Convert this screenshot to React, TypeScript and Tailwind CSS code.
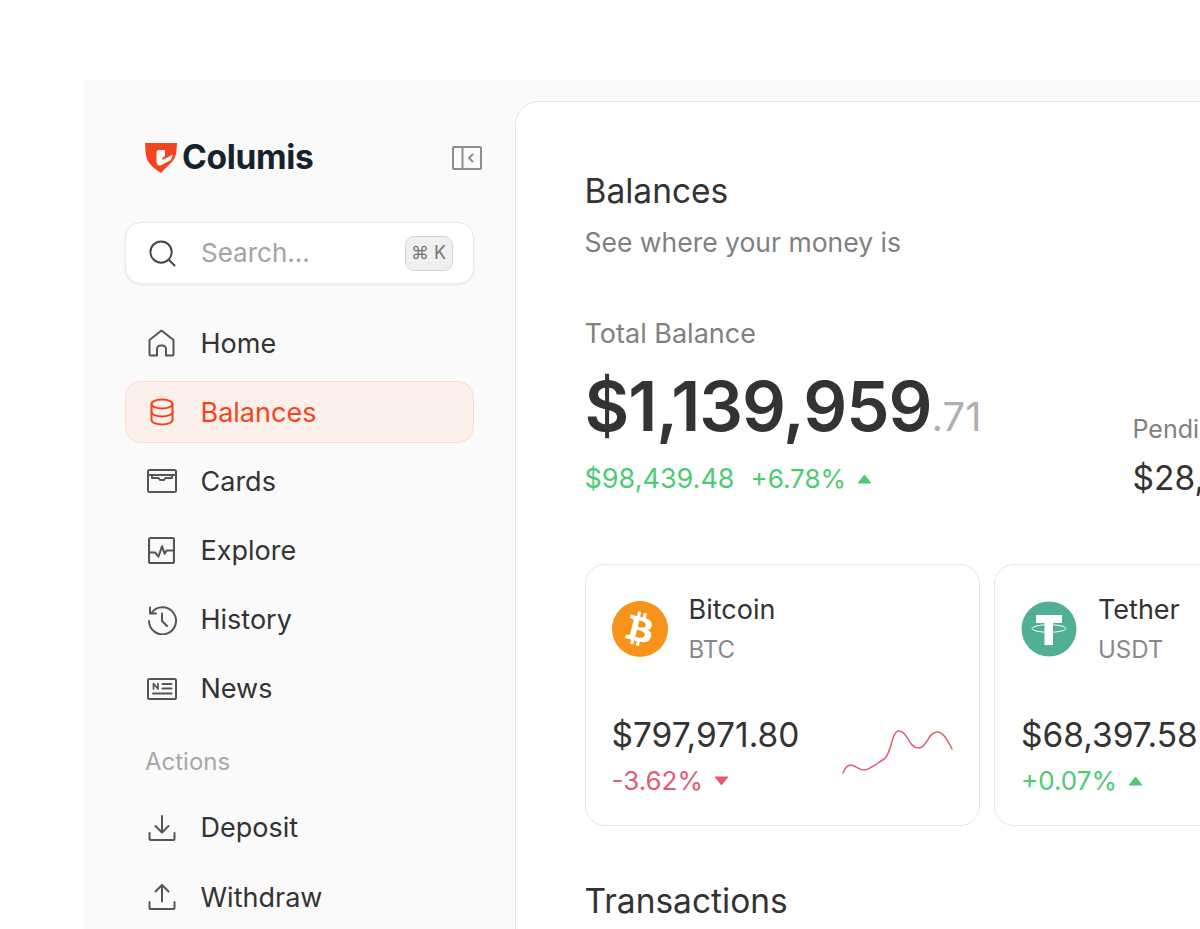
import React from 'react';
import { FaBtc } from 'react-icons/fa';

type IconProps = { className?: string };

const stroke = {
    fill: 'none',
    stroke: 'currentColor',
    strokeWidth: 2,
    strokeLinecap: 'round' as const,
    strokeLinejoin: 'round' as const,
};

function HomeIcon({ className }: IconProps) {
    return (
        <svg viewBox="0 0 27 28" className={className} {...stroke}>
            <path d="M1.500 11 13.500 1.500l12 9.500v14.500a1 1 0 0 1-1 1H18v-6.500a3.500 3.500 0 0 0-3.500-3.500h-2A3.500 3.500 0 0 0 9 20v6.500H2.500a1 1 0 0 1-1-1z" />
        </svg>
    );
}

function DatabaseIcon({ className }: IconProps) {
    return (
        <svg viewBox="0 0 24 28" className={className} {...stroke}>
            <ellipse cx="12" cy="6" rx="10.500" ry="4.500" />
            <path d="M1.500 6v16c0 2.500 4.700 4.500 10.500 4.500s10.500-2 10.500-4.500V6" />
            <path d="M1.500 14c0 2.500 4.700 4.500 10.500 4.500s10.500-2 10.500-4.500" />
        </svg>
    );
}

function CardsIcon({ className }: IconProps) {
    return (
        <svg viewBox="0 0 30 24" className={className} {...stroke}>
            <rect x="1" y="1" width="28" height="22" rx="1.500" />
            <path d="M1 6h28" />
            <path d="M5 6v3h6.500l1.500 2h4l1.500-2H25V6" />
        </svg>
    );
}

function ExploreIcon({ className }: IconProps) {
    return (
        <svg viewBox="0 0 26 26" className={className} {...stroke}>
            <rect x="1" y="1" width="24" height="24" rx="1.500" />
            <path d="M1 15h6l3 4 3.500-10 2.500 7 2-3h6.500" />
        </svg>
    );
}

function HistoryIcon({ className }: IconProps) {
    return (
        <svg viewBox="0 0 30 30" className={className} {...stroke}>
            <path d="M4.500 8A13.500 13.500 0 1 1 2 16" />
            <path d="M3 2.500V8.500h6" />
            <path d="M15 8.500v7.500l5 5" />
        </svg>
    );
}

function NewsIcon({ className }: IconProps) {
    return (
        <svg viewBox="0 0 30 22" className={className} {...stroke}>
            <rect x="1" y="1" width="28" height="20" rx="1.500" />
            <path d="M6.500 11V5.500l4.500 5.500V5.500" strokeWidth="1.700" />
            <path d="M15.500 6h9M15.500 10.500h9M6 15.500h18.500" />
        </svg>
    );
}

function DepositIcon({ className }: IconProps) {
    return (
        <svg viewBox="0 0 28 28" className={className} {...stroke}>
            <path d="M14 2v16M7.500 12l6.500 6.500 6.500-6.500" />
            <path d="M1.500 19v6a1 1 0 0 0 1 1h23a1 1 0 0 0 1-1v-6" />
        </svg>
    );
}

function WithdrawIcon({ className }: IconProps) {
    return (
        <svg viewBox="0 0 28 28" className={className} {...stroke}>
            <path d="M14 18.500V2M7.500 8.500 14 2l6.500 6.500" />
            <path d="M1.500 19v6a1 1 0 0 0 1 1h23a1 1 0 0 0 1-1v-6" />
        </svg>
    );
}

function Logo() {
    return (
        <svg viewBox="0 0 32 30" className="w-[32px] h-[30px]">
            <path fill="#f4441f" d="M0 0h32l-.6 8.500c-.5 5-2.500 8.500-5.500 11.500-3 3-6.500 6-9.900 10C11 26.500 6.500 23.500 3.500 19 1.200 15.500.4 11 0 0z" />
            <path fill="#fafafa" d="M11.500 9.500Q11.500 7 14 7H20V13L17.500 14.500V17L28 11.500L26 17L16.500 22Q12 23.500 11.500 19Z" />
        </svg>
    );
}

function Triangle({ down, className }: { down?: boolean; className?: string }) {
    return (
        <svg viewBox="0 0 16 11" className={className}>
            <path d={down ? 'M1 1h14L8 10z' : 'M8 1l7 9H1z'} fill="currentColor" stroke="currentColor" strokeWidth="1" strokeLinejoin="round" />
        </svg>
    );
}

function BitcoinLogo() {
    return (
        <div className="w-[56px] h-[56px] shrink-0 rounded-full bg-[#f7931a] flex items-center justify-center">
            <FaBtc className="w-[30px] h-[34px] text-white rotate-[14deg]" />
        </div>
    );
}

function TetherLogo() {
    return (
        <svg viewBox="0 0 56 56" className="w-[56px] h-[56px] shrink-0">
            <circle cx="28" cy="28" r="27.500" fill="#50af95" />
            <path d="M15 14h26v8H32v22h-8.500V22H15z" fill="#fff" />
            <ellipse cx="28" cy="27.500" rx="17" ry="3.800" fill="none" stroke="#fff" strokeWidth="1" />
        </svg>
    );
}

const navItems = [
    { label: 'Home', icon: HomeIcon, size: 'w-[27px] h-[28px]' },
    { label: 'Balances', icon: DatabaseIcon, size: 'w-[24px] h-[28px]', active: true },
    { label: 'Cards', icon: CardsIcon, size: 'w-[30px] h-[24px]' },
    { label: 'Explore', icon: ExploreIcon, size: 'w-[27px] h-[27px]' },
    { label: 'History', icon: HistoryIcon, size: 'w-[30px] h-[30px]' },
    { label: 'News', icon: NewsIcon, size: 'w-[30px] h-[22px]' },
];

function NavRow({ label, icon: Icon, size, active }: { label: string; icon: React.ComponentType<IconProps>; size: string; active?: boolean }) {
    return (
        <div
            className={`flex items-center h-[62px] rounded-[16px] border ${active ? 'bg-[#fdefe9] border-[#fadccf] text-[#f4441f]' : 'border-transparent text-[#333333]'}`}
        >
            <span className={`w-[74.500px] pr-[3px] flex justify-center shrink-0 ${active ? '' : 'text-[#555555]'}`}>
                <Icon className={size} />
            </span>
            <span className="text-[27px] leading-none">{label}</span>
        </div>
    );
}

function Sidebar() {
    return (
        <aside className="w-[431px] shrink-0 pl-[41px] pr-[41.500px] pt-[60px]">
            <div className="flex items-center justify-between h-[36px] pl-[20px] pr-[1px]">
                <div className="flex items-center gap-[5px]">
                    <Logo />
                    <span className="text-[33.500px] font-bold tracking-[-0.3px] text-[#16232c] leading-none">Columis</span>
                </div>
                <svg viewBox="0 0 30 24" className="w-[30px] h-[24px] mr-[-9px] text-[#8e8e8e]" fill="none" stroke="currentColor" strokeWidth="2">
                    <rect x="1" y="1" width="28" height="22" rx="1" />
                    <path d="M10.500 1v22" />
                    <path d="M20.500 8.500 17 12l3.500 3.500" strokeLinecap="round" strokeLinejoin="round" />
                </svg>
            </div>
            <div className="mt-[46px] flex items-center h-[62px] bg-white rounded-[16px] border border-[#e8e8e8] shadow-[0_1px_3px_rgba(0,0,0,0.08)] pl-[23px] pr-[20px]">
                <svg viewBox="0 0 28 28" className="w-[27px] h-[27px] shrink-0 text-[#444444]" fill="none" stroke="currentColor" strokeWidth="2" strokeLinecap="round">
                    <circle cx="12.500" cy="12.500" r="11" />
                    <path d="m21 21 5.500 5.500" />
                </svg>
                <span className="ml-[25px] text-[26px] text-[#a3a3a3] leading-none flex-1">Search...</span>
                <span className="w-[48px] h-[35px] flex items-center justify-center gap-[5px] rounded-[9px] bg-[#f0f0f0] border border-[#d5d5d5] text-[18px] text-[#777777] leading-none">
                    <span>⌘</span>
                    <span>K</span>
                </span>
            </div>
            <nav className="mt-[28px] flex flex-col gap-[7.200px]">
                {navItems.map((item) => (
                    <NavRow key={item.label} {...item} />
                ))}
            </nav>
            <div className="mt-[30px] pl-[20px] text-[24px] leading-none text-[#a8a8a8]">Actions</div>
            <div className="mt-[23px] flex flex-col gap-[7.200px]">
                <NavRow label="Deposit" icon={DepositIcon} size="w-[28px] h-[28px]" />
                <NavRow label="Withdraw" icon={WithdrawIcon} size="w-[28px] h-[28px]" />
            </div>
        </aside>
    );
}

function Sparkline() {
    return (
        <svg viewBox="0 0 112 50" className="w-[112px] h-[50px]" fill="none" stroke="#e25c6f" strokeWidth="1.500" strokeLinecap="round">
            <path d="M1 47C3 42 6 39 9 39C13 39 16 44 22 44C27 44 34 38 42 33C50 28 49 5 57 5C66 5 66 22 77 22C85 22 86 6 95 6C102 6 106 16 110 23" />
        </svg>
    );
}

function CoinCard({ logo, name, symbol, amount, change, down, spark, className }: { logo: React.ReactNode; name: string; symbol: string; amount: string; change: string; down?: boolean; spark?: boolean; className?: string }) {
    const tone = down ? 'text-[#e25c6f]' : 'text-[#4ccb74]';
    return (
        <div className={`h-[262px] shrink-0 rounded-[20px] border border-[#e6e6e6] pl-[26px] pr-[26px] pt-[36px] ${className ?? ''}`}>
            <div className="flex items-start gap-[21px]">
                {logo}
                <div className="-mt-[10px]">
                    <div className="text-[27px] leading-[38px] text-[#333333]">{name}</div>
                    <div className="mt-[5px] text-[24px] leading-[32px] text-[#8a8a8a]">{symbol}</div>
                </div>
            </div>
            <div className="mt-[47px] flex items-end justify-between">
                <div>
                    <div className="text-[33.500px] leading-[44px] text-[#333333] whitespace-nowrap">{amount}</div>
                    <div className={`mt-[6px] flex items-center gap-[11px] text-[26px] leading-[36px] ${tone}`}>
                        {change}
                        <Triangle down={down} className="w-[15px] h-[10px]" />
                    </div>
                </div>
                {spark && (
                    <div className="mb-[23px] -mr-[1px]">
                        <Sparkline />
                    </div>
                )}
            </div>
        </div>
    );
}

function Main() {
    return (
        <main className="flex-1 min-w-0 mt-[21px] bg-white rounded-tl-[24px] border-l border-t border-[#e6e6e6] pl-[68.500px] pt-[68px] overflow-hidden">
            <h1 className="text-[33.500px] leading-[42px] text-[#333333]">Balances</h1>
            <p className="mt-[13px] text-[26.500px] leading-[34px] text-[#808080]">See where your money is</p>
            <div className="mt-[58px] flex items-start">
                <div className="w-[548px] shrink-0">
                    <div className="text-[27px] leading-[34px] text-[#808080]">Total Balance</div>
                    <div className="mt-[13px] flex items-baseline leading-none text-[#333333]">
                        <span className="text-[68.800px] font-semibold leading-[84px] tracking-[-1px]">$1,139,959</span>
                        <span className="text-[40px] text-[#b0b0b0]">.71</span>
                    </div>
                    <div className="mt-[13px] flex items-center text-[27px] leading-[36px] text-[#4ccb74]">
                        <span>$98,439.48</span>
                        <span className="ml-[16px] text-[26px]">+6.78%</span>
                        <Triangle className="ml-[11px] w-[15px] h-[10px]" />
                    </div>
                </div>
                <div className="shrink-0 mt-[96px]">
                    <div className="text-[25px] leading-[32px] text-[#808080] whitespace-nowrap">Pending</div>
                    <div className="mt-[12px] text-[33.500px] leading-[42px] text-[#333333] whitespace-nowrap">$28,439.48</div>
                </div>
            </div>
            <div className="mt-[65px] flex gap-[14px]">
                <CoinCard logo={<BitcoinLogo />} name="Bitcoin" symbol="BTC" amount="$797,971.80" change="-3.62%" down spark className="w-[395.500px]" />
                <CoinCard logo={<TetherLogo />} name="Tether" symbol="USDT" amount="$68,397.58" change="+0.07%" className="w-[396px]" />
            </div>
            <h2 className="mt-[53px] text-[33.500px] leading-[44px] text-[#333333]">Transactions</h2>
        </main>
    );
}

export default function App() {
    return (
        <div className="w-[1200px] h-[929px] overflow-hidden bg-white pt-[80px] pl-[84px] font-['Inter',sans-serif]">
            <div className="flex w-[1116px] h-[849px] bg-[#fafafa] overflow-hidden">
                <Sidebar />
                <Main />
            </div>
        </div>
    );
}
